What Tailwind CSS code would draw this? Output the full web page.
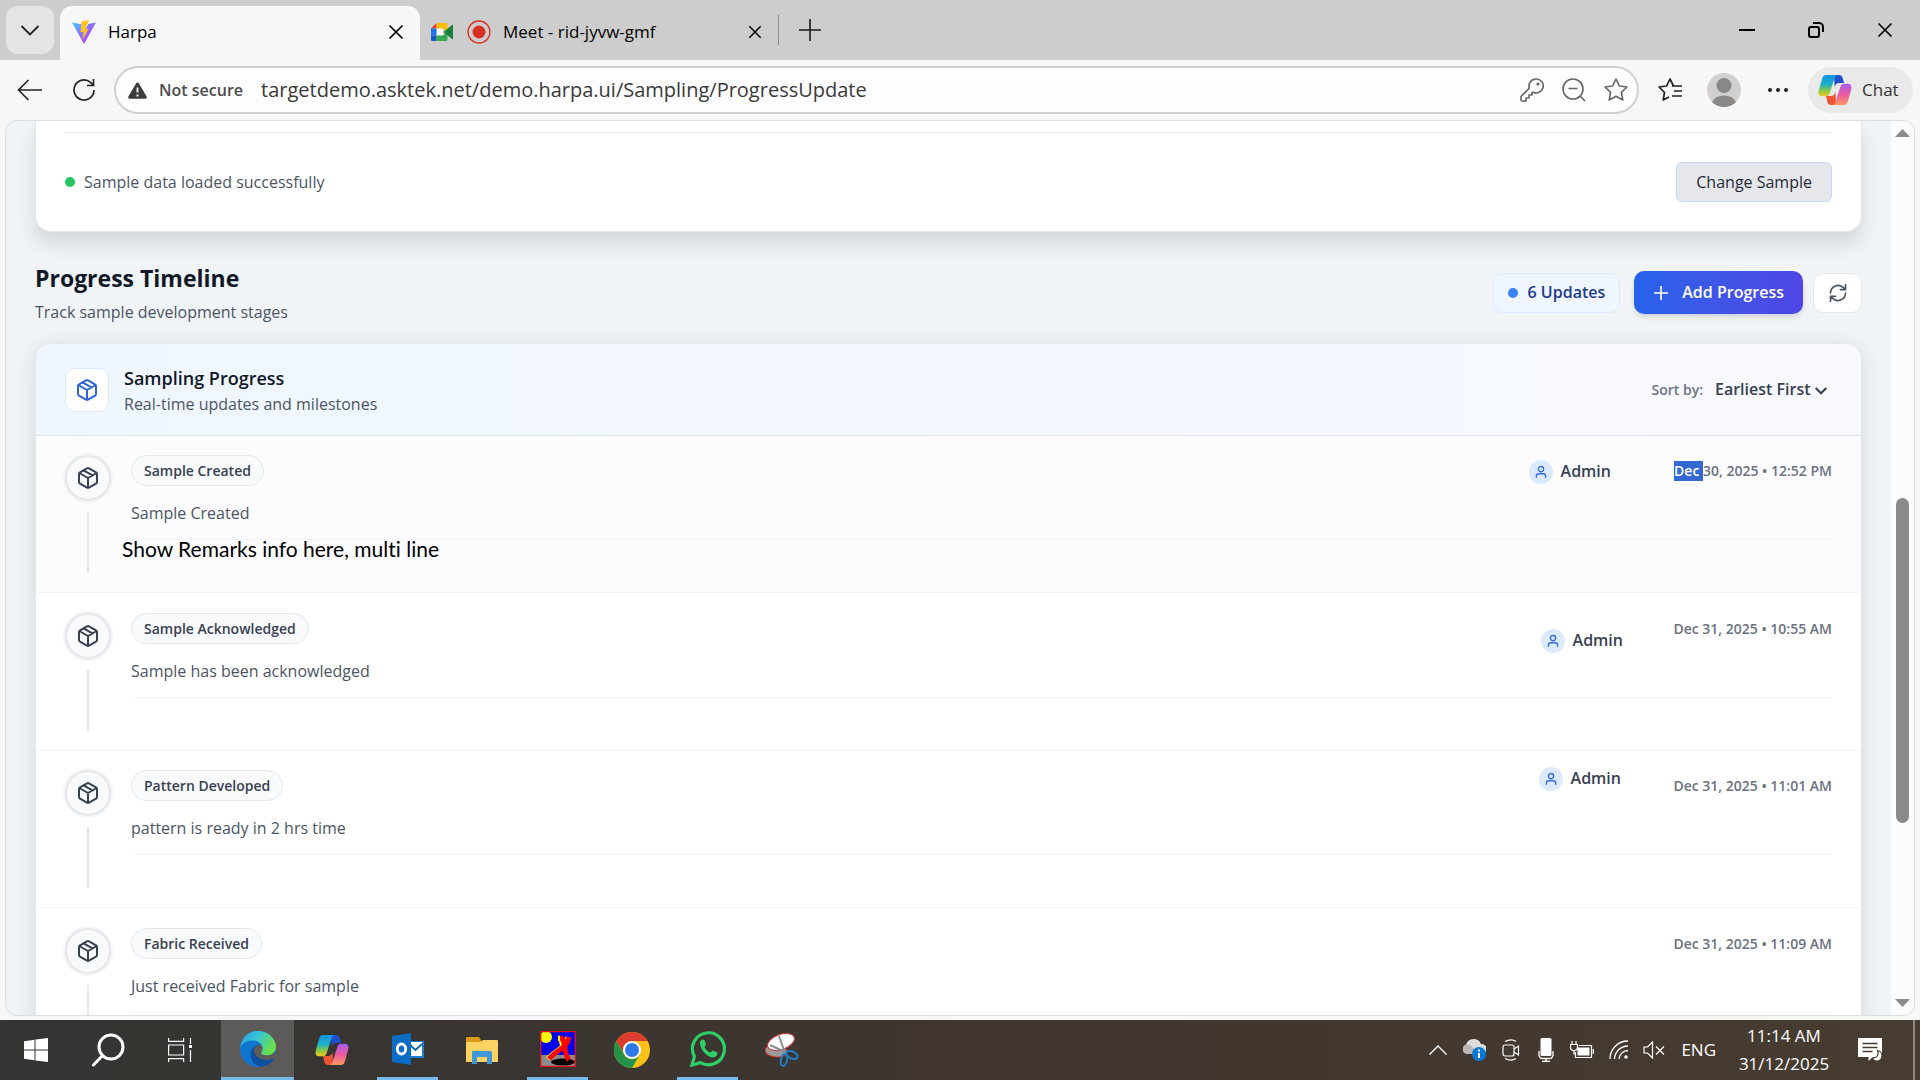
<!DOCTYPE html>
<html lang="en">
<head>
    <meta charset="UTF-8">
    <meta name="viewport" content="width=device-width, initial-scale=1.0">
    <title>Harpa</title>
    <script src="https://cdn.jsdelivr.net/npm/@tailwindcss/browser@4"></script>
</head>
<body class="h-screen flex flex-col overflow-hidden bg-[#f7f7f7] font-['Open_Sans','Noto_Sans',sans-serif] text-[#1b1b1b]">

    <!-- shared icons -->
    <svg class="absolute w-0 h-0">
        <defs>
            <linearGradient id="cpA" x1="0" y1="0" x2="0" y2="1"><stop offset="0" stop-color="#1292e6"/><stop offset=".45" stop-color="#1fb0c4"/><stop offset=".75" stop-color="#8fcb3b"/><stop offset="1" stop-color="#f3c520"/></linearGradient>
            <linearGradient id="cpB" x1="0" y1="0" x2="0" y2="1"><stop offset="0" stop-color="#a75cf2"/><stop offset=".5" stop-color="#ea5aa0"/><stop offset="1" stop-color="#ff9a62"/></linearGradient>
        </defs>
        <symbol id="box" viewBox="0 0 24 24" fill="none" stroke="currentColor" stroke-width="2" stroke-linecap="round" stroke-linejoin="round">
            <path d="m7.5 4.27 9 5.15M21 8a2 2 0 0 0-1-1.73l-7-4a2 2 0 0 0-2 0l-7 4A2 2 0 0 0 3 8v8a2 2 0 0 0 1 1.73l7 4a2 2 0 0 0 2 0l7-4A2 2 0 0 0 21 16ZM3.3 7l8.7 5 8.7-5M12 22V12"/>
        </symbol>
        <symbol id="user" viewBox="0 0 24 24" fill="none" stroke="currentColor" stroke-width="2.4" stroke-linecap="round" stroke-linejoin="round">
            <circle cx="12" cy="7" r="4.5"/><path d="M20 21v-1.500a4.500 4.500 0 0 0-4.500-4.500h-7A4.500 4.500 0 0 0 4 19.500V21"/>
        </symbol>
        <symbol id="close" viewBox="0 0 16 16" fill="none" stroke="currentColor" stroke-width="1.700"><path d="M1.500 1.500l13 13M14.500 1.500l-13 13"/></symbol>
        <symbol id="copilot" viewBox="0 0 34 32">
            <path d="M16 1h5c2 0 3 1 3.600 3l1.500 5h-5c-2.500 0-3.500 1.500-4.500 4Z" fill="#1d4fd0"/>
            <path d="M18 31h-5c-2 0-3-1-3.600-3L8 22h5c2.500 0 3.500-1.500 4.500-4Z" fill="#ee5433"/>
            <path d="M8 1h12c-2 0-3 1.500-3.700 4l-4.600 14c-.7 2-1.700 3.300-4 3.300H4.500C1 22.300 0 20 .8 16.500L4 5c.7-2.500 2-4 4-4Z" fill="url(#cpA)"/>
            <path d="M26 31H14c2 0 3-1.500 3.700-4l4.600-14c.7-2 1.700-3.300 4-3.300h3.200c3.500 0 4.500 2.300 3.700 5.800L30 27c-.7 2.500-2 4-4 4Z" fill="url(#cpB)"/>
        </symbol>
    </svg>

    <!-- tab strip -->
    <div class="h-15 shrink-0 flex items-end bg-[#cdcdcd]">
        <button class="w-12 h-12 ml-[6px] mb-[6px] mr-[6px] rounded-xl bg-[#e4e4e4] flex items-center justify-center" aria-label="Tab actions">
            <svg class="w-5 h-5" viewBox="0 0 20 20" fill="none" stroke="#222" stroke-width="1.800"><path d="M1.500 6l8.500 8.500L18.500 6"/></svg>
        </button>
        <div class="w-[360px] h-[54px] rounded-t-xl bg-[#f7f7f7] flex items-center pl-3 pr-4 pb-[3px]">
            <svg class="w-6 h-6" viewBox="0 0 24 24">
                <defs><linearGradient id="vt" x1="0" y1="0" x2="1" y2="1"><stop stop-color="#41c8ff"/><stop offset=".8" stop-color="#bd34fe"/></linearGradient></defs>
                <path d="M0 2.500l10.500 2L12 13l4-9 8-1.500L12 24Z" fill="url(#vt)"/>
                <path d="M17 0L9.500 1.500 8.500 12h3l-1 8L16.500 9h-3Z" fill="#ffc21f"/>
            </svg>
            <span class="ml-3 text-[17px] leading-6 text-black">Harpa</span>
            <button class="ml-auto w-4 h-4 text-black" aria-label="Close tab"><svg class="w-4 h-4"><use href="#close"/></svg></button>
        </div>
        <div class="w-[358px] h-[54px] flex items-center pl-[11px] pr-4 pb-[3px]">
            <svg class="w-[22px] h-[18px]" viewBox="0 0 22 18">
                <path d="M5.500 5.500H12v7H5.500Z" fill="#fff"/><path d="M0 5.500L5.500 0v5.500Z" fill="#e53935"/><path d="M0 5.500h5.500v7H0Z" fill="#1e73e8"/><path d="M0 12.500h5.500V18H1.500A1.500 1.500 0 0 1 0 16.500Z" fill="#1557c0"/>
                <path d="M5.500 0H15a1.500 1.500 0 0 1 1.500 1.500V9L12 5.500H5.500Z" fill="#fbbc04"/><path d="M5.500 12.500H12L16.500 9v7.500A1.500 1.500 0 0 1 15 18H5.500Z" fill="#34a853"/><path d="M12.500 9L21 2c.5-.4 1-.2 1 .5v13c0 .7-.5.9-1 .5Z" fill="#188038"/>
            </svg>
            <svg class="ml-[14px] w-6 h-6" viewBox="0 0 24 24"><circle cx="12" cy="12" r="11" fill="none" stroke="#d93025" stroke-width="1.300"/><circle cx="12" cy="12" r="6.500" fill="#d93025"/></svg>
            <span class="ml-3 text-[17px] leading-6 text-black">Meet - rid-jyvw-gmf</span>
            <button class="ml-auto w-[14px] h-4 text-black" aria-label="Close tab"><svg class="w-[14px] h-4"><use href="#close"/></svg></button>
        </div>
        <div class="h-[30px] w-px mb-[15px] bg-[#8a8a8a]"></div>
        <button class="ml-5 mb-[19px]" aria-label="New tab"><svg class="w-[22px] h-[22px]" viewBox="0 0 22 22" stroke="#1b1b1b" stroke-width="1.600"><path d="M11 0v22M0 11h22"/></svg></button>
        <div class="ml-auto h-full flex items-center gap-[53px] pr-[27px] text-black">
            <button aria-label="Minimize"><svg class="w-4 h-4" viewBox="0 0 16 16" stroke="currentColor" stroke-width="2"><path d="M0 8h16"/></svg></button>
            <button aria-label="Restore"><svg class="w-4 h-4" viewBox="0 0 16 16" fill="none" stroke="currentColor" stroke-width="2"><rect x="1" y="5" width="10" height="10" rx="2"/><path d="M5 1h6a4 4 0 0 1 4 4v5"/></svg></button>
            <button aria-label="Close"><svg class="w-4 h-4"><use href="#close"/></svg></button>
        </div>
    </div>

    <!-- toolbar -->
    <div class="h-15 shrink-0 flex items-center pl-[17px] pr-[7px]">
        <button aria-label="Back"><svg class="w-[25px] h-[22px]" viewBox="0 0 25 22" fill="none" stroke="#222" stroke-width="1.600"><path d="M25 11H2M11.500 1L1.500 11l10 10"/></svg></button>
        <button class="ml-[30px]" aria-label="Refresh"><svg class="w-6 h-6" viewBox="0 0 24 24" fill="none" stroke="#222" stroke-width="1.700"><path d="M22 12a10 10 0 1 1-3.500-7.600L21 7M21.500 1v6.500H15"/></svg></button>
        <div class="ml-[18px] h-12 flex-1 flex items-center rounded-full border-2 border-[#d0d0d0] bg-[#fdfdfd] pl-3 pr-[9px]">
            <svg class="w-[19px] h-[17px]" viewBox="0 0 19 17"><path d="M9.500.5a1.500 1.500 0 0 1 1.300.8l7.800 13.200a1.500 1.500 0 0 1-1.300 2.300H1.700A1.500 1.500 0 0 1 .4 14.500L8.200 1.300A1.500 1.500 0 0 1 9.500.5Z" fill="#3b3b3b"/><path d="M9.500 5.500v5M9.500 12.500v2" stroke="#fff" stroke-width="1.800"/></svg>
            <label for="url" class="ml-3 text-[16px] leading-6 font-semibold text-[#4c4c4c]">Not secure</label>
            <input id="url" type="text" value="targetdemo.asktek.net/demo.harpa.ui/Sampling/ProgressUpdate" class="ml-[18px] flex-1 bg-transparent text-[20px] leading-7 text-[#3a3a3a] outline-none">
            <div class="flex items-center gap-[18px] text-[#666]">
                <button aria-label="Passwords"><svg class="w-6 h-6" viewBox="0 0 24 24" fill="none" stroke="currentColor" stroke-width="1.600" stroke-linejoin="round"><path d="M16 1a7 7 0 0 0-6.700 9.200L1 18.500V22a1 1 0 0 0 1 1h4v-3h3v-3h3v-2.500l1-.3A7 7 0 1 0 16 1Z"/><circle cx="18" cy="6" r=".8" fill="currentColor"/></svg></button>
                <button aria-label="Zoom out"><svg class="w-6 h-6" viewBox="0 0 24 24" fill="none" stroke="currentColor" stroke-width="1.600"><circle cx="11" cy="11" r="10"/><path d="M6.500 10.500h9M18 18l5 5"/></svg></button>
                <button aria-label="Add to favorites"><svg class="w-6 h-6" viewBox="0 0 24 24" fill="none" stroke="currentColor" stroke-width="1.600" stroke-linejoin="round"><path d="M12 1l3.400 7 7.600 1-5.600 5.300L18.800 22 12 18.300 5.200 22l1.400-7.700L1 9l7.600-1Z"/></svg></button>
            </div>
        </div>
        <button class="ml-[19px]" aria-label="Favorites"><svg class="w-6 h-6" viewBox="0 0 24 24" fill="none" stroke="#222" stroke-width="1.700" stroke-linejoin="round"><path d="M15.500 8L12 1 8.600 8 1 9l5.500 5.500L5.200 22 11 19M14 8h10M16 13h8M14 18h10"/></svg></button>
        <button class="ml-[25px]" aria-label="Profile"><svg class="w-[34px] h-[34px]" viewBox="0 0 34 34"><circle cx="17" cy="17" r="17" fill="#d2d0ce"/><circle cx="17" cy="12.500" r="7.500" fill="#8a8886"/><path d="M5 29a12.500 9 0 0 1 24 0 17 17 0 0 1-24 0Z" fill="#8a8886"/></svg></button>
        <button class="ml-[27px]" aria-label="Settings and more"><svg class="w-5 h-5" viewBox="0 0 20 20" fill="#222"><circle cx="2" cy="10" r="2"/><circle cx="10" cy="10" r="2"/><circle cx="18" cy="10" r="2"/></svg></button>
        <button class="ml-5 h-[46px] w-[105px] rounded-full bg-[#e9e9e9] flex items-center pl-[10px] gap-[10px] text-[17px] text-[#333]"><svg class="w-[34px] h-8"><use href="#copilot"/></svg>Chat</button>
    </div>

    <!-- page viewport -->
    <div class="flex-1 min-h-0 mx-[5px] mb-1 flex rounded-xl border border-[#dedede] overflow-hidden bg-[#f0f4f7]">
        <main class="flex-1 px-[29px] text-[16px] leading-[25px]">

            <section class="rounded-b-2xl border-x border-b border-[#e5e7eb] bg-white px-[29px] pt-[11px] pb-[29px] shadow-[0_12px_20px_rgba(0,0,0,0.12)]">
                <div class="border-t border-[#e5e7eb] pt-[29px] flex items-center justify-between">
                    <p class="flex items-center gap-[9px] text-[#4b5563]"><span class="w-[10px] h-[10px] rounded-full bg-[#22c55e]"></span>Sample data loaded successfully</p>
                    <button class="h-10 px-[19px] rounded-md border border-[#c3d9f8] bg-[#e5e7eb] text-[#1f2937]">Change Sample</button>
                </div>
            </section>

            <div class="mt-[28px] flex items-center">
                <div>
                    <h2 class="text-[23px] leading-9 font-bold text-[#111827]">Progress Timeline</h2>
                    <p class="mt-1 text-[#4b5563]">Track sample development stages</p>
                </div>
                <span class="ml-auto h-10 px-[14px] rounded-[10px] border border-[#dbeafe] bg-[#eff6ff] flex items-center gap-[10px] font-semibold text-[#1e3a8a]"><span class="w-[10px] h-[10px] rounded-full bg-[#3b82f6]"></span>6 Updates</span>
                <button class="ml-[14px] h-[43px] px-[19px] rounded-[10px] bg-linear-to-r from-[#2563eb] to-[#4f46e5] text-white font-semibold flex items-center gap-[13px] shadow-md">
                    <svg class="w-4 h-4" viewBox="0 0 16 16" stroke="currentColor" stroke-width="1.600"><path d="M8 1v14M1 8h14"/></svg>Add Progress
                </button>
                <button class="ml-[10px] w-[49px] h-10 rounded-[10px] border border-[#e5e7eb] bg-white flex items-center justify-center text-[#4b5563]" aria-label="Refresh updates">
                    <svg class="w-5 h-5" viewBox="0 0 24 24" fill="none" stroke="currentColor" stroke-width="2" stroke-linecap="round" stroke-linejoin="round"><path d="M21 2v6h-6M3 12a9 9 0 0 1 15-6.700L21 8M3 22v-6h6M21 12a9 9 0 0 1-15 6.700L3 16"/></svg>
                </button>
            </div>

            <section class="mt-[18px] rounded-t-2xl border border-[#e5e7eb] bg-white overflow-clip shadow-[0_4px_20px_rgba(0,0,0,0.12)]">
                <header class="h-[92px] px-[29px] flex items-center border-b border-[#e0e5ec] bg-linear-to-r from-[#eff6ff] to-[#f8f9ff]">
                    <div class="w-11 h-11 rounded-[10px] border border-[#dbeafe] bg-white flex items-center justify-center text-[#2f63d9]"><svg class="w-6 h-6"><use href="#box"/></svg></div>
                    <div class="ml-[15px] pt-[2px]">
                        <h3 class="text-[18px] leading-7 font-semibold text-[#111827]">Sampling Progress</h3>
                        <p class="text-[#4b5563]">Real-time updates and milestones</p>
                    </div>
                    <label for="sort" class="ml-auto text-[14px] font-semibold text-[#6b7280]">Sort by:</label>
                    <div class="relative ml-3">
                        <select id="sort" class="appearance-none bg-transparent pr-[21px] font-semibold text-[#374151]">
                            <option>Earliest First</option>
                            <option>Latest First</option>
                        </select>
                        <svg class="absolute right-[5px] top-[10px] w-3 h-2 pointer-events-none" viewBox="0 0 12 8" fill="none" stroke="#374151" stroke-width="2"><path d="M.7 1L6 6.300 11.300 1"/></svg>
                    </div>
                </header>

                <!-- sample created -->
                <article class="relative h-[157px] px-[29px] pt-[19px] flex items-start gap-5 border-b border-[#f3f4f6] bg-[#fcfcfe]">
                    <div class="flex flex-col items-center">
                        <div class="w-[46px] h-[46px] rounded-full border-2 border-[#e5e7eb] bg-[#f9fafb] ring-2 ring-[#f3f4f6] flex items-center justify-center text-[#374151]"><svg class="w-6 h-6"><use href="#box"/></svg></div>
                        <div class="mt-[11px] w-[2px] h-[61px] bg-[#e5e7eb]"></div>
                    </div>
                    <div class="flex-1">
                        <div class="flex items-center justify-between">
                            <span class="h-[31px] px-3 rounded-full border border-[#e5e7eb] bg-[#f9fafb] flex items-center text-[14px] font-semibold text-[#374151]">Sample Created</span>
                            <time class="text-[14px] font-semibold leading-5 text-[#6b7280]"><span class="inline-block bg-[#3367d1] text-white">Dec&nbsp;</span>30, 2025 • 12:52 PM</time>
                        </div>
                        <p class="mt-[15px] pb-[13px] border-b border-[#f3f4f6] text-[#4b5563]">Sample Created</p>
                    </div>
                    <p class="absolute left-[82px] top-[100px] px-1 text-[21px] leading-[26px] text-black font-['Lato',sans-serif] [font-variant-ligatures:none]">Show Remarks info here, multi line</p>
                    <div class="absolute right-[250px] top-[23px] flex items-center gap-2 font-semibold text-[#374151]"><span class="w-6 h-6 rounded-full bg-[#dbeafe] flex items-center justify-center text-[#3b6fe0]"><svg class="w-[14px] h-[14px]"><use href="#user"/></svg></span>Admin</div>
                </article>

                <!-- sample acknowledged -->
                <article class="relative h-[158px] px-[29px] pt-5 flex items-start gap-5 border-b border-[#f3f4f6]">
                    <div class="flex flex-col items-center">
                        <div class="w-[46px] h-[46px] rounded-full border-2 border-[#e5e7eb] bg-[#f9fafb] ring-2 ring-[#f3f4f6] flex items-center justify-center text-[#374151]"><svg class="w-6 h-6"><use href="#box"/></svg></div>
                        <div class="mt-[11px] w-[2px] h-[61px] bg-[#e5e7eb]"></div>
                    </div>
                    <div class="flex-1">
                        <div class="flex items-center justify-between">
                            <span class="h-[31px] px-3 rounded-full border border-[#e5e7eb] bg-[#f9fafb] flex items-center text-[14px] font-semibold text-[#374151]">Sample Acknowledged</span>
                            <time class="text-[14px] font-semibold leading-5 text-[#6b7280]">Dec 31, 2025 • 10:55 AM</time>
                        </div>
                        <p class="mt-[15px] pb-[13px] border-b border-[#f3f4f6] text-[#4b5563]">Sample has been acknowledged</p>
                    </div>
                    <div class="absolute right-[238px] top-[35px] flex items-center gap-2 font-semibold text-[#374151]"><span class="w-6 h-6 rounded-full bg-[#dbeafe] flex items-center justify-center text-[#3b6fe0]"><svg class="w-[14px] h-[14px]"><use href="#user"/></svg></span>Admin</div>
                </article>

                <!-- pattern developed -->
                <article class="relative h-[157px] px-[29px] pt-[19px] flex items-start gap-5 border-b border-[#f3f4f6]">
                    <div class="flex flex-col items-center">
                        <div class="w-[46px] h-[46px] rounded-full border-2 border-[#e5e7eb] bg-[#f9fafb] ring-2 ring-[#f3f4f6] flex items-center justify-center text-[#374151]"><svg class="w-6 h-6"><use href="#box"/></svg></div>
                        <div class="mt-[11px] w-[2px] h-[61px] bg-[#e5e7eb]"></div>
                    </div>
                    <div class="flex-1">
                        <div class="flex items-center justify-between">
                            <span class="h-[31px] px-3 rounded-full border border-[#e5e7eb] bg-[#f9fafb] flex items-center text-[14px] font-semibold text-[#374151]">Pattern Developed</span>
                            <time class="text-[14px] font-semibold leading-5 text-[#6b7280]">Dec 31, 2025 • 11:01 AM</time>
                        </div>
                        <p class="mt-[15px] pb-[13px] border-b border-[#f3f4f6] text-[#4b5563]">pattern is ready in 2 hrs time</p>
                    </div>
                    <div class="absolute right-[240px] top-[15px] flex items-center gap-2 font-semibold text-[#374151]"><span class="w-6 h-6 rounded-full bg-[#dbeafe] flex items-center justify-center text-[#3b6fe0]"><svg class="w-[14px] h-[14px]"><use href="#user"/></svg></span>Admin</div>
                </article>

                <!-- fabric received -->
                <article class="relative h-[158px] px-[29px] pt-5 flex items-start gap-5">
                    <div class="flex flex-col items-center">
                        <div class="w-[46px] h-[46px] rounded-full border-2 border-[#e5e7eb] bg-[#f9fafb] ring-2 ring-[#f3f4f6] flex items-center justify-center text-[#374151]"><svg class="w-6 h-6"><use href="#box"/></svg></div>
                        <div class="mt-[11px] w-[2px] h-[61px] bg-[#e5e7eb]"></div>
                    </div>
                    <div class="flex-1">
                        <div class="flex items-center justify-between">
                            <span class="h-[31px] px-3 rounded-full border border-[#e5e7eb] bg-[#f9fafb] flex items-center text-[14px] font-semibold text-[#374151]">Fabric Received</span>
                            <time class="text-[14px] font-semibold leading-5 text-[#6b7280]">Dec 31, 2025 • 11:09 AM</time>
                        </div>
                        <p class="mt-[15px] pb-[13px] border-b border-[#f3f4f6] text-[#4b5563]">Just received Fabric for sample</p>
                    </div>
                </article>
            </section>
        </main>

        <!-- scrollbar -->
        <div class="w-[23px] bg-[#fcfcfc] flex flex-col items-center py-2 text-[#8b8b8b]">
            <svg class="w-[15px] h-2" viewBox="0 0 15 8" fill="currentColor"><path d="M0 8L7.500 0 15 8Z"/></svg>
            <div class="flex-1 w-[13px] flex flex-col">
                <div class="basis-[361px]"></div>
                <div class="h-[325px] rounded-full bg-[#8b8b8b]"></div>
            </div>
            <svg class="w-[15px] h-2" viewBox="0 0 15 8" fill="currentColor"><path d="M0 0h15L7.500 8Z"/></svg>
        </div>
    </div>

    <!-- taskbar -->
    <footer class="h-15 shrink-0 flex items-stretch bg-linear-to-r from-[#333432] via-[#40352f] to-[#473c31] text-white">
        <button class="w-[72px] flex items-center justify-center" aria-label="Start"><svg class="w-6 h-6" viewBox="0 0 24 24" fill="#fff"><path d="M0 3.300l10.500-1.500v9.700H0ZM11.500 1.600L24 0v11.500H11.500ZM0 12.500h10.500v9.700L0 20.700ZM11.500 12.500H24V24l-12.500-1.600Z"/></svg></button>
        <button class="w-[72px] flex items-center justify-center" aria-label="Search"><svg class="w-[34px] h-[34px]" viewBox="0 0 34 34" fill="none" stroke="#fff" stroke-width="3" stroke-linecap="round"><circle cx="20" cy="14" r="12"/><path d="M11.500 22.500L2.500 32"/></svg></button>
        <button class="w-[72px] mr-[5px] flex items-center justify-center" aria-label="Task view"><svg class="w-6 h-6" viewBox="0 0 24 24" fill="none" stroke="#fff" stroke-width="1.200"><path d="M.6 0v3.400h15V0M.6 24v-3.400h15V24M.6 7h15v10H.6ZM22.500 0v6M22.500 12v12"/><path d="M21 7h3v3h-3Z" fill="#fff" stroke="none"/></svg></button>
        <button class="w-[73px] flex items-center justify-center bg-[#5c5b5a] border-b-3 border-[#76b9ed]" aria-label="Edge">
            <svg class="w-9 h-9" viewBox="0 0 36 36">
                <defs><linearGradient id="eg" x1="0" y1="0" x2="1" y2=".4"><stop offset="0" stop-color="#2a9ee0"/><stop offset=".5" stop-color="#35c3d6"/><stop offset="1" stop-color="#6be04c"/></linearGradient></defs>
                <circle cx="18" cy="18" r="18" fill="#0f76cf"/>
                <path d="M0 17C1 7 8.500 0 18 0c10 0 18 7.500 18 16 0 5-4 8.500-9 8.500-3.500 0-6-1-6-2.500 0-1 1.500-1.800 1.500-4.500C22.500 13 18 9.500 12.500 9.500 6.500 9.500 1.500 12.500 0 17Z" fill="url(#eg)"/>
                <path d="M18 13.500c-5 1.500-8 6-7.500 11 .6 6 5.500 11 11.500 11.200 5-1 9-4 11.500-8.200-7 2.500-15 1-17-4.500-1.200-3.500-.5-7 1.500-9.500Z" fill="#104f9e"/>
                <path d="M14 21c-.5-4 2.500-7.500 6.300-7.200 1.500 1 2.200 2.500 2.200 4 0 2.400-1.500 3.200-1.500 4.200 0 1.500 2.500 2.500 6 2.500 3 0 6-1.500 7.800-4.500v6c-1 1.500-2 2-3 2-6 2-16 1-17.800-7Z" fill="#5c5b5a"/>
                <path d="M14 21c1 5 8 9.500 18 7.500a1 1 0 0 1 1 1.500C28 36 17 38 12.500 29c-1-3-.5-6 1.500-8Z" fill="#104f9e"/>
            </svg>
        </button>
        <button class="w-[75px] flex items-center justify-center" aria-label="Copilot"><svg class="w-[34px] h-8"><use href="#copilot"/></svg></button>
        <button class="w-[75px] pl-2 pr-[6px]" aria-label="Outlook"><span class="h-full flex items-center justify-center border-b-3 border-[#76b9ed]">
            <svg class="w-8 h-8" viewBox="0 0 32 32"><path d="M15 8h17v17H15Z" fill="#1e7fd0"/><path d="M17 9h13v14H17Z" fill="#fff"/><path d="M18 12l5.500 5 6.500-6" fill="none" stroke="#0a64ad" stroke-width="1.800"/><path d="M0 3l19-3v32L0 29Z" fill="#0a6cc4"/><ellipse cx="9.500" cy="16" rx="4.200" ry="5" fill="none" stroke="#fff" stroke-width="2.800"/></svg></span></button>
        <button class="w-[75px] flex items-center justify-center" aria-label="File Explorer"><svg class="w-8 h-[27px]" viewBox="0 0 32 27"><path d="M0 1a1 1 0 0 1 1-1h12l2 3v4H0Z" fill="#d99a12"/><path d="M0 5h14l3-2h14a1 1 0 0 1 1 1v21H0Z" fill="#fbd365"/><path d="M6 27V15.500A1.500 1.500 0 0 1 7.500 14h17a1.500 1.500 0 0 1 1.500 1.500V27h-5v-7H11v7Z" fill="#3e97d6"/></svg></button>
        <button class="w-[75px] pl-2 pr-[6px]" aria-label="X server"><span class="h-full flex items-center justify-center border-b-3 border-[#76b9ed]">
            <svg class="w-9 h-9" viewBox="0 0 36 36"><path d="M0 0h36v24H0Z" fill="#0000f0"/><path d="M0 24h36v12H0Z" fill="#8b8b8b"/><circle cx="6" cy="6" r="6" fill="#ff0"/><ellipse cx="23" cy="31" rx="12" ry="3.500" fill="#000"/><path d="M28 6c-2 12-12 12-20 22M18 7c4 0 4 5 5 11" fill="none" stroke="#ff0" stroke-width="5"/><path d="M29 6c-2 12-12 12-20 22M20 7c4 0 4 5 5 11s2 9 4 11" fill="none" stroke="#f00" stroke-width="5"/><path d="M.6.6h34.800v34.800H.6Z" fill="none" stroke="#e0101c" stroke-width="1.500"/></svg></span></button>
        <button class="w-[75px] flex items-center justify-center" aria-label="Chrome">
            <svg class="w-9 h-9" viewBox="0 0 36 36"><circle cx="18" cy="18" r="18" fill="#fbc116"/><path d="M2.400 9A18 18 0 0 1 33.600 9H18a9 9 0 0 0-7.800 13.500Z" fill="#dd3b2e"/><path d="M2.400 9l7.800 13.500A9 9 0 0 0 25.800 22.500L18 36A18 18 0 0 1 2.400 9Z" fill="#229347"/><circle cx="18" cy="18" r="9" fill="#fff"/><circle cx="18" cy="18" r="7" fill="#2f78ea"/></svg>
        </button>
        <button class="w-[75px] pl-2 pr-[6px]" aria-label="WhatsApp"><span class="h-full flex items-center justify-center border-b-3 border-[#76b9ed]">
            <svg class="w-9 h-9" viewBox="0 0 36 36"><path d="M2 34l2.400-8.500A16 16 0 1 1 10.500 31.700Z" fill="none" stroke="#2fcf67" stroke-width="3.200"/><path d="M10 12c0-2 1.500-3.500 3-3.500 1 0 1.400.5 1.800 1.500l1.200 3c.3 1-1.600 2.400-1.500 3 1 2.600 3.300 4.600 6 5.500.8 0 1.800-2.200 2.700-2l3.500 1.700c.8.400.9.900.6 2-.5 2-2.800 3.300-4.600 3.200C16.500 26 10 18 10 12Z" fill="#2fcf67"/></svg></span></button>
        <button class="w-[75px] flex items-center justify-center" aria-label="Snipping Tool">
            <svg class="w-[34px] h-[34px]" viewBox="0 0 34 34" fill="none"><ellipse cx="11" cy="18" rx="11" ry="6" fill="#9a9a9a" stroke="#c33" transform="rotate(5 11 18)"/><ellipse cx="16" cy="9" rx="14" ry="7.500" fill="#fff" stroke="#d23c3c" transform="rotate(-20 16 9)"/><path d="M14 3l6 17M5 12l15 7" stroke="#8b8f94" stroke-width="2"/><ellipse cx="19" cy="27" rx="3" ry="6" stroke="#1c7fcb" stroke-width="2" transform="rotate(12 19 27)"/><ellipse cx="27" cy="22" rx="6" ry="3.500" stroke="#1c7fcb" stroke-width="2" transform="rotate(25 27 22)"/></svg>
        </button>

        <div class="ml-auto flex items-center">
            <svg class="w-[18px] h-[10px]" viewBox="0 0 18 10" fill="none" stroke="#fff" stroke-width="1.400"><path d="M.5 9.500L9 1l8.500 8.500"/></svg>
            <svg class="ml-[15px] w-6 h-[22px]" viewBox="0 0 24 22"><path d="M5 15a5 5 0 0 1-1-9.500A8 8 0 0 1 19 5a5 5 0 0 1 1 10Z" fill="#dedcda"/><path d="M4 6c3-1 5 0 7 3l8 6H6C0 15-1 8 4 6Z" fill="#b9b6b3"/><circle cx="17" cy="15" r="7" fill="#0b78d4"/><path d="M17 14v5M17 10.500v2" stroke="#fff" stroke-width="2"/></svg>
            <svg class="ml-4 w-[18px] h-[22px]" viewBox="0 0 18 22" fill="none" stroke="#fff" stroke-width="1.200"><rect x="1" y="6" width="11" height="11" rx="2"/><path d="M12 10l4.500-3v9L12 13M3 2.500C7 .5 11 .5 14 2.500M3 19.500c4 2 8 2 11 0"/></svg>
            <svg class="ml-[18px] w-4 h-6" viewBox="0 0 16 24"><rect x="2.500" width="11" height="18" rx="1.500" fill="#fff"/><path d="M1 13v4a3.500 3.500 0 0 0 3.500 3.500h7A3.500 3.500 0 0 0 15 17v-4M8 20v3M4 23.400h8" fill="none" stroke="#fff" stroke-width="1.300"/></svg>
            <svg class="ml-4 w-6 h-[18px]" viewBox="0 0 24 18" fill="none" stroke="#fff" stroke-width="1.200"><rect x="7.500" y="6.500" width="12" height="8" fill="#fff" stroke="none"/><path d="M9 4.500h12.500v12H5.500V11M23.300 8v5M2 0v3M6 0v3M.5 3.500h7v3a3 3 0 0 1-3 3h-1a3 3 0 0 1-3-3ZM4 9.500V13h2"/></svg>
            <svg class="ml-[15px] w-5 h-5" viewBox="0 0 20 20" fill="none" stroke="#fff" stroke-width="1.300"><path d="M1 19A18 18 0 0 1 19 1M5.500 19A13.500 13.500 0 0 1 19 6M10 19a9 9 0 0 1 9-8.500"/><circle cx="17" cy="17" r="1.800" fill="#fff" stroke="none"/></svg>
            <svg class="ml-[14px] w-[22px] h-[18px]" viewBox="0 0 22 18" fill="none" stroke="#fff" stroke-width="1.200"><path d="M1 6h3.500L9.500 1v16l-5-5H1ZM13 5.500l8 8M21 5.500l-8 8"/></svg>
            <span class="ml-4 text-[17px]">ENG</span>
            <div class="ml-[19px] w-[98px] text-center text-[17px] leading-7 whitespace-nowrap">11:14 AM<br>31/12/2025</div>
            <svg class="ml-[25px] w-[25px] h-6" viewBox="0 0 25 24"><path d="M0 0h24v19h-9l-4.500 4v-4H0Z" fill="#fff"/><path d="M4.500 5.500h15M4.500 9.500h15M4.500 13.500h10" stroke="#463a30" stroke-width="1.300"/><path d="M19.500 12.500c2 4-1 8-5.500 8 3.500 4.500 10 3 10-3 0-2.500-2-4.500-4.500-5Z" fill="#fff" stroke="#463a30" stroke-width="1.200"/></svg>
            <div class="ml-[30px] mr-[5px] w-[2px] h-15 bg-[#8d857e]"></div>
        </div>
    </footer>
</body>
</html>
